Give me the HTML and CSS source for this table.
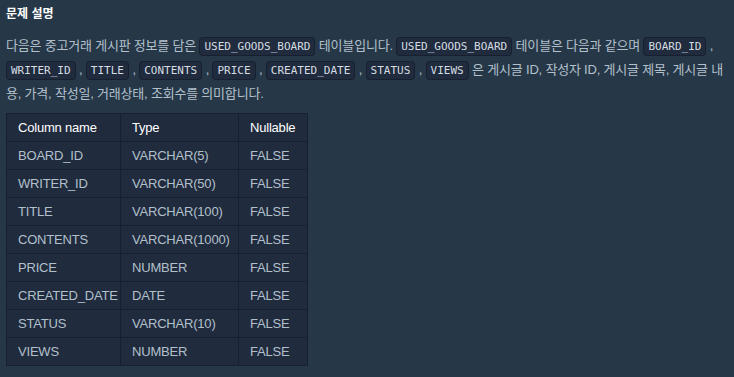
FILE: index.html
```html
<!DOCTYPE html>
<html lang="ko">
<head>
<meta charset="utf-8">
<link rel="stylesheet" href="styles.css">
</head>
<body>
<div class="guide">
  <h6 class="title">문제 설명</h6>
  <p class="desc">다음은 중고거래 게시판 정보를 담은 <code>USED_GOODS_BOARD</code> 테이블입니다. <code>USED_GOODS_BOARD</code> 테이블은 다음과 같으며 <code>BOARD_ID</code> , <code>WRITER_ID</code> , <code>TITLE</code> , <code>CONTENTS</code> , <code>PRICE</code> , <code>CREATED_DATE</code> , <code>STATUS</code> , <code>VIEWS</code> 은 게시글 ID, 작성자 ID, 게시글 제목, 게시글 내용, 가격, 작성일, 거래상태, 조회수를 의미합니다.</p>
  <table class="schema">
    <colgroup>
      <col class="c-name">
      <col class="c-type">
      <col class="c-null">
    </colgroup>
    <thead>
      <tr><th>Column name</th><th>Type</th><th>Nullable</th></tr>
    </thead>
    <tbody>
      <tr><td>BOARD_ID</td><td>VARCHAR(5)</td><td>FALSE</td></tr>
      <tr><td>WRITER_ID</td><td>VARCHAR(50)</td><td>FALSE</td></tr>
      <tr><td>TITLE</td><td>VARCHAR(100)</td><td>FALSE</td></tr>
      <tr><td>CONTENTS</td><td>VARCHAR(1000)</td><td>FALSE</td></tr>
      <tr><td>PRICE</td><td>NUMBER</td><td>FALSE</td></tr>
      <tr><td>CREATED_DATE</td><td>DATE</td><td>FALSE</td></tr>
      <tr><td>STATUS</td><td>VARCHAR(10)</td><td>FALSE</td></tr>
      <tr><td>VIEWS</td><td>NUMBER</td><td>FALSE</td></tr>
    </tbody>
  </table>
</div>
</body>
</html>
```
FILE: styles.css
```css
html, body {
  margin: 0;
  padding: 0;
  background: #263747;
}
.guide {
  padding: 6px 6px 0 6px;
  font-family: "Liberation Sans", "Noto Sans CJK KR", sans-serif;
  color: #b2c0cc;
}
.title {
  margin: 0 0 12px 0;
  font-size: 12px;
  line-height: 16px;
  font-weight: 700;
  color: #ffffff;
}
.desc {
  margin: 0 0 8px 0;
  font-size: 13px;
  line-height: 23px;
  letter-spacing: -0.2px;
}
.desc code {
  font-family: "DejaVu Sans Mono", monospace;
  font-size: 11px;
  color: #d5dde3;
  background: #202b3d;
  border: 1px solid #172030;
  border-radius: 4px;
  padding: 2px 4px;
  letter-spacing: 0;
}
.schema {
  border-collapse: collapse;
  table-layout: fixed;
  width: 301px;
  background: #202b3d;
  font-size: 13px;
  letter-spacing: -0.2px;
}
.c-name { width: 114px; }
.c-type { width: 118px; }
.c-null { width: 69px; }
.schema th, .schema td {
  border: 1px solid #172030;
  padding: 0 0 0 11px;
  height: 27px;
  text-align: left;
  white-space: nowrap;
  overflow: visible;
}
.schema th {
  font-weight: 400;
  color: #ffffff;
}
.schema td {
  color: #b2c0cc;
}
```
